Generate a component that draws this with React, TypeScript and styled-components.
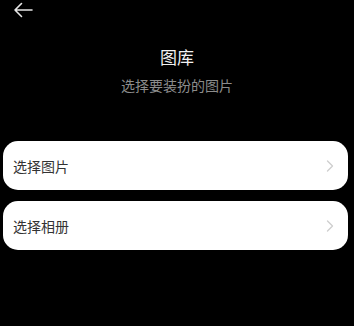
import React from 'react';
import styled, { createGlobalStyle } from 'styled-components';

const GlobalStyle = createGlobalStyle`
  html, body {
    margin: 0;
    padding: 0;
    background: #000;
  }
  body {
    font-family: "Noto Sans CJK SC", "Noto Sans", sans-serif;
  }
`;

const Page = styled.div`
  width: 354px;
  height: 326px;
  background: #000;
  display: flex;
  flex-direction: column;
`;

const TopBar = styled.div`
  height: 20px;
  display: flex;
  align-items: center;
  padding-left: 13px;
`;

const BackButton = styled.button`
  background: none;
  border: none;
  padding: 0;
  display: flex;
  cursor: pointer;
`;

const Header = styled.div`
  display: flex;
  flex-direction: column;
  align-items: center;
  margin-top: 26px;
`;

const Title = styled.div`
  color: #f2f2f2;
  font-size: 17px;
  line-height: 22px;
`;

const Subtitle = styled.div`
  margin-top: 7px;
  color: #8c8c8c;
  font-size: 14px;
  line-height: 20px;
`;

const List = styled.div`
  display: flex;
  flex-direction: column;
  gap: 11px;
  padding: 0 6px 0 3px;
  margin-top: 46px;
`;

const Item = styled.div`
  height: 49px;
  background: #fff;
  border-radius: 15px;
  display: flex;
  align-items: center;
  justify-content: space-between;
  padding: 0 14px 0 10px;
`;

const ItemLabel = styled.span`
  color: #333;
  font-size: 14px;
`;

const Chevron = () => (
  <svg width="8" height="12" viewBox="0 0 8 12" fill="none">
    <path d="M1.5 1 L6.5 6 L1.5 11" stroke="#cfcfcf" strokeWidth="1.4" strokeLinecap="round" strokeLinejoin="round" />
  </svg>
);

const BackArrow = () => (
  <svg width="20" height="16" viewBox="0 0 20 16" fill="none">
    <path d="M19 8 H2 M8.5 1.5 L2 8 L8.5 14.5" stroke="#e6e6e6" strokeWidth="1.6" strokeLinecap="round" strokeLinejoin="round" />
  </svg>
);

const items = ['选择图片', '选择相册'];

export default function App() {
  return (
    <Page>
      <GlobalStyle />
      <TopBar>
        <BackButton>
          <BackArrow />
        </BackButton>
      </TopBar>
      <Header>
        <Title>图库</Title>
        <Subtitle>选择要装扮的图片</Subtitle>
      </Header>
      <List>
        {items.map((label) => (
          <Item key={label}>
            <ItemLabel>{label}</ItemLabel>
            <Chevron />
          </Item>
        ))}
      </List>
    </Page>
  );
}
